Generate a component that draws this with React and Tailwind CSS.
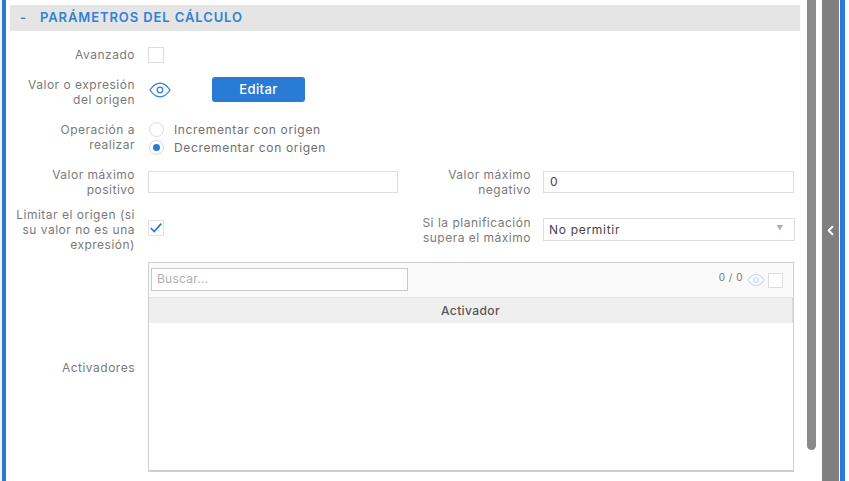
import { ChevronLeft } from 'lucide-react';

function EyeIcon({ className }) {
  return (
    <svg viewBox="0 0 22 16" fill="none" stroke="currentColor" strokeWidth="1.3" className={className}>
      <path d="M1 8C4 3.5 7.5 1.2 11 1.2S18 3.5 21 8c-3 4.5-6.5 6.8-10 6.8S4 12.5 1 8Z" />
      <circle cx="11" cy="8" r="2.8" />
    </svg>
  );
}

function Label({ children, className = '' }) {
  return (
    <div className={`w-[125px] shrink-0 text-right text-[12px] leading-[15px] tracking-[0.5px] text-[#7a7a7a] ${className}`}>
      {children}
    </div>
  );
}

export default function App() {
  return (
    <div className="flex h-[481px] w-[849px] overflow-hidden bg-white font-['Inter',sans-serif]">
      <div className="w-[2px] bg-[#f4f4f4]" />
      <div className="w-[4px] bg-[#2a7bd8]" />

      <div className="w-[801px] pl-[4px] pt-[5px]">
        {/* Section header */}
        <div className="flex h-[26px] w-[790px] items-center bg-[#e5e5e5] pl-[10px] text-[13px] font-semibold tracking-[0.9px] text-[#2f82d6]">
          <span className="w-[20px]">-</span>
          <span>PARÁMETROS DEL CÁLCULO</span>
        </div>

        <div className="mt-[16px] flex h-[15px] items-center">
          <Label>Avanzado</Label>
          <div className="ml-[13px] h-[16px] w-[16px] border border-[#dcdcdc] bg-white" />
        </div>

        <div className="mt-[15px] flex h-[30px] items-start">
          <Label>Valor o expresión<br />del origen</Label>
          <EyeIcon className="ml-[14px] mt-[5px] h-[16px] w-[22px] text-[#2f82d6]" />
          <button className="ml-[41px] h-[25px] w-[93px] rounded-[3px] bg-[#2a7bd4] text-[13px] font-medium tracking-[0.4px] text-white">
            Editar
          </button>
        </div>

        <div className="mt-[15px] flex h-[30px] items-start">
          <Label>Operación a<br />realizar</Label>
          <div className="ml-[14px] flex flex-col gap-[3px] text-[12px] leading-[15px] tracking-[0.65px] text-[#6f6f6f]">
            <div className="flex items-center">
              <span className="h-[15px] w-[15px] rounded-full border border-[#dcdcdc]" />
              <span className="ml-[10px]">Incrementar con origen</span>
            </div>
            <div className="flex items-center">
              <span className="flex h-[15px] w-[15px] items-center justify-center rounded-full border border-[#c5d8ee]">
                <span className="h-[7px] w-[7px] rounded-full bg-[#2a7bd4]" />
              </span>
              <span className="ml-[10px]">Decrementar con origen</span>
            </div>
          </div>
        </div>

        <div className="mt-[15px] flex h-[30px] items-center">
          <Label>Valor máximo<br />positivo</Label>
          <div className="ml-[13px] h-[22px] w-[250px] border border-[#dedede] bg-white" />
          <Label className="ml-[8px]">Valor máximo<br />negativo</Label>
          <div className="ml-[12px] flex h-[22px] w-[251px] items-center border border-[#dedede] bg-white pl-[6px] text-[12px] text-[#444]">
            0
          </div>
        </div>

        <div className="mt-[10px] flex h-[45px] items-center">
          <Label>Limitar el origen (si<br />su valor no es una<br />expresión)</Label>
          <div className="ml-[13px] mb-[3px] flex h-[16px] w-[16px] items-center justify-center border border-[#e2e2e2] bg-white">
            <svg viewBox="0 0 16 16" fill="none" stroke="#2a7bd4" strokeWidth="2" className="h-[16px] w-[16px]">
              <path d="M2 8l4 4 8-9" />
            </svg>
          </div>
          <Label className="ml-[242px]">Si la planificación<br />supera el máximo</Label>
          <div className="ml-[12px] flex h-[23px] w-[252px] items-center justify-between border border-[#dedede] bg-white pl-[5px] pr-[10px] text-[12px] tracking-[0.7px] text-[#444]">
            <span>No permitir</span>
            <span className="text-[7px] text-[#a9b2bd]">▼</span>
          </div>
        </div>

        <div className="mt-[10px] flex h-[210px] items-center">
          <Label>Activadores</Label>
          <div className="ml-[13px] h-[210px] w-[646px] border border-b-2 border-[#cfcfcf] bg-white">
            <div className="flex h-[35px] items-center justify-between border-b border-[#e2e2e2] bg-[#fafafa] pl-[2px] pr-[10px]">
              <div className="mb-[2px] flex h-[23px] w-[257px] items-center border border-[#c9c9c9] bg-white pl-[5px] text-[12px] tracking-[0.25px] text-[#b0b0b0]">
                Buscar...
              </div>
              <div className="flex items-center">
                <span className="mb-[5px] text-[10px] tracking-[0.5px] text-[#777]">0 / 0</span>
                <EyeIcon className="ml-[4px] h-[14px] w-[18px] text-[#c4daf2]" />
                <span className="ml-[3px] h-[15px] w-[15px] border border-[#dcdcdc] bg-white" />
              </div>
            </div>
            <div className="flex h-[25px] items-center justify-center border-r border-[#dcdcdc] bg-[#efefef] text-[12px] font-medium tracking-[0.4px] text-[#555]">
              Activador
            </div>
          </div>
        </div>
      </div>

      {/* Scrollbar */}
      <div className="h-[450px] w-[9px] rounded-b-[5px] bg-[#8a8a8a]" />
      <div className="w-[6px] bg-white" />

      {/* Collapse bar */}
      <div className="flex w-[17px] items-center justify-center bg-[#7f7f7f] pb-[20px]">
        <ChevronLeft className="h-[15px] w-[15px] text-white" strokeWidth={3} />
      </div>
      <div className="w-[1px] bg-white" />
      <div className="w-[5px] bg-[#2a7bd8]" />
      <div className="w-[4px] bg-white" />
    </div>
  );
}
